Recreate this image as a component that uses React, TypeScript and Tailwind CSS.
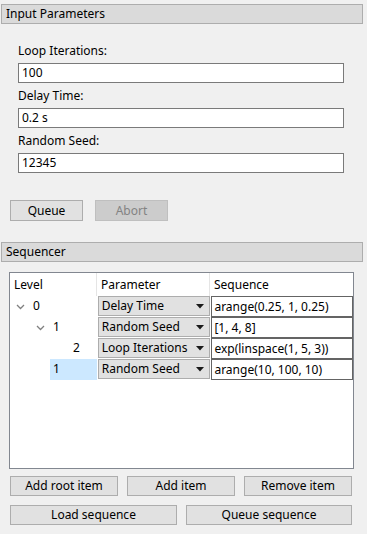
import React from 'react';

const Chevron = () => (
  <svg width="9" height="6" viewBox="0 0 9 6" className="block">
    <polyline points="1,1 4.5,4.5 8,1" fill="none" stroke="#808080" strokeWidth="1.3" />
  </svg>
);

const Field = ({ label, value }: { label: string; value: string }) => (
  <div className="flex flex-col">
    <div className="h-[16px] leading-[16px]">{label}</div>
    <div className="mt-[4px] h-[20px] w-[326px] border border-[#7a7a7a] bg-white pl-[3px] leading-[18px]">
      {value}
    </div>
  </div>
);

const GroupHeader = ({ title }: { title: string }) => (
  <div className="ml-[1px] h-[20px] w-[362px] border border-[#adadad] bg-[#dadada] pl-[4px] leading-[18px]">
    {title}
  </div>
);

interface Row {
  depth: number;
  level: string;
  expanded?: boolean;
  selected?: boolean;
  param: string;
  seq: string;
}

const ROWS: Row[] = [
  { depth: 0, level: '0', expanded: true, param: 'Delay Time', seq: 'arange(0.25, 1, 0.25)' },
  { depth: 1, level: '1', expanded: true, param: 'Random Seed', seq: '[1, 4, 8]' },
  { depth: 2, level: '2', param: 'Loop Iterations', seq: 'exp(linspace(1, 5, 3))' },
  { depth: 1, level: '1', selected: true, param: 'Random Seed', seq: 'arange(10, 100, 10)' },
];

const indent: Record<number, string> = { 0: 'w-[20px]', 1: 'w-[40px]', 2: 'w-[60px]' };

const TreeRow = ({ row }: { row: Row }) => (
  <div className="flex h-[21px]">
    <div className="flex w-[87px]">
      <div className={`${indent[row.depth]} flex shrink-0 justify-end items-center`}>
        <div className="flex w-[20px] justify-center">{row.expanded && <Chevron />}</div>
      </div>
      <div className={`flex-1 pl-[3px] leading-[20px] ${row.selected ? 'bg-[#cce8ff]' : ''}`}>{row.level}</div>
    </div>
    <div className="flex w-[113px] h-[20px] items-center justify-between border border-[#adadad] bg-[#e1e1e1] pl-[3px] pr-[5px] ml-[1px]">
      <span>{row.param}</span>
      <svg width="8" height="5" viewBox="0 0 8 5">
        <polygon points="0,0 8,0 4,4.5" fill="#1a1a1a" />
      </svg>
    </div>
    <div className="ml-[1px] h-[21px] w-[142px] border border-[#646464] bg-white pl-[2px] leading-[19px]">
      {row.seq}
    </div>
  </div>
);

const Button = ({ label, w, h = 'h-[21px]', disabled }: { label: string; w: string; h?: string; disabled?: boolean }) => (
  <div
    className={`${w} ${h} flex items-center justify-center border ${
      disabled ? 'border-[#bfbfbf] bg-[#cccccc] text-[#838383]' : 'border-[#adadad] bg-[#e1e1e1]'
    }`}
  >
    {label}
  </div>
);

export default function App() {
  return (
    <div
      className="w-[367px] h-[534px] bg-[#f0f0f0] pt-[4px] text-[12px] text-black overflow-hidden"
      style={{ fontFamily: '"Noto Sans", "Open Sans", sans-serif' }}
    >
      <GroupHeader title="Input Parameters" />

      <div className="mt-[19px] ml-[18px] flex flex-col gap-[5px]">
        <Field label="Loop Iterations:" value="100" />
        <Field label="Delay Time:" value="0.2 s" />
        <Field label="Random Seed:" value="12345" />
      </div>

      <div className="mt-[27px] ml-[10px] flex gap-[12px]">
        <Button label="Queue" w="w-[73px]" />
        <Button label="Abort" w="w-[73px]" disabled />
      </div>

      <div className="mt-[21px]">
        <GroupHeader title="Sequencer" />
      </div>

      <div className="mt-[10px] ml-[9px] h-[197px] w-[345px] border border-[#828790] bg-white">
        <div className="flex h-[23px] leading-[23px]">
          <div className="w-[87px] pl-[4px] border-r border-[#e5e5e5]">Level</div>
          <div className="w-[113px] pl-[4px] border-r border-[#e5e5e5]">Parameter</div>
          <div className="flex-1 pl-[4px]">Sequence</div>
        </div>
        {ROWS.map((r, i) => (
          <TreeRow key={i} row={r} />
        ))}
      </div>

      <div className="mt-[7px] ml-[10px] flex gap-[9px]">
        <Button label="Add root item" w="w-[108px]" h="h-[20px]" />
        <Button label="Add item" w="w-[108px]" h="h-[20px]" />
        <Button label="Remove item" w="w-[108px]" h="h-[20px]" />
      </div>

      <div className="mt-[9px] ml-[10px] flex gap-[9px]">
        <Button label="Load sequence" w="w-[167px]" h="h-[20px]" />
        <Button label="Queue sequence" w="w-[166px]" h="h-[20px]" />
      </div>
    </div>
  );
}
